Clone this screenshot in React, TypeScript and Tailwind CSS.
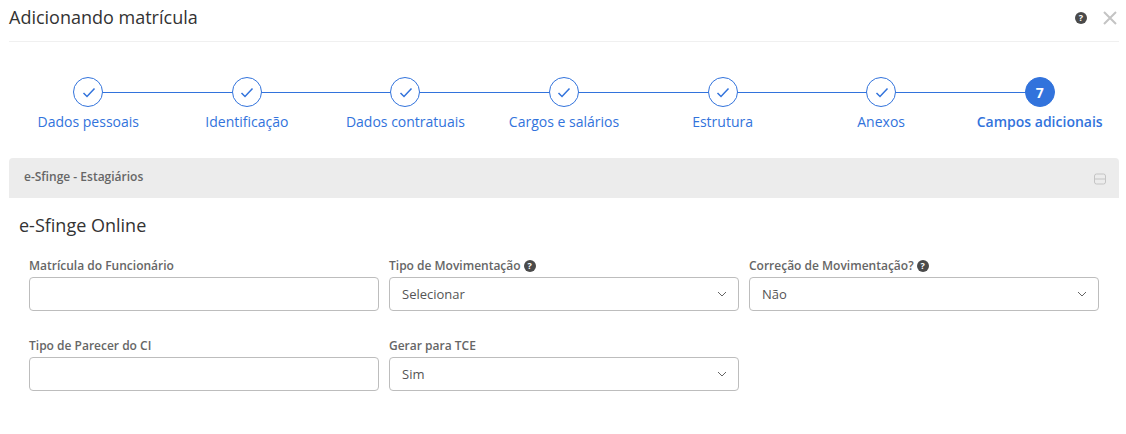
import React from "react";

const steps = ["Dados pessoais", "Identificação", "Dados contratuais", "Cargos e salários", "Estrutura", "Anexos", "Campos adicionais"];

function Help({ size = 12 }: { size?: number }) {
  return (
    <span
      className="inline-flex items-center justify-center rounded-full bg-[#4a4a4a] text-white font-bold shrink-0"
      style={{ width: size, height: size, fontSize: size - 3, lineHeight: 1 }}
    >
      ?
    </span>
  );
}

function Chevron() {
  return (
    <svg width="10" height="6" viewBox="0 0 10 6" fill="none" stroke="#666" strokeWidth="1" className="shrink-0">
      <path d="M1 1l4 4 4-4" />
    </svg>
  );
}

function Field({ label, help, value, select }: { label: string; help?: boolean; value?: string; select?: boolean }) {
  return (
    <div className="w-[350px]">
      <div className="flex items-center gap-[3px] h-[17px] text-[12px] font-semibold text-[#666]">
        {label}
        {help && <Help />}
      </div>
      <div className="mt-[3px] h-[34px] border border-[#bdbdbd] rounded-[4px] bg-white flex items-center justify-between pl-[12px] pr-[11px] text-[13px] text-[#555]">
        <span className="mt-[2px]">{value}</span>
        {select && <Chevron />}
      </div>
    </div>
  );
}

export default function App() {
  return (
    <div className="w-[1126px] h-[434px] bg-white overflow-hidden pl-[9px] pr-[7px] font-['Open_Sans',sans-serif]">
      <div className="h-[42px] border-b border-[#f0f0f0] flex items-center justify-between pb-[6px]">
        <h1 className="text-[18px] text-[#333] font-normal">Adicionando matrícula</h1>
        <div className="flex items-center gap-[16px] pr-[2px]">
          <Help size={12} />
          <svg width="14" height="14" viewBox="0 0 14 14" stroke="#c4c4c4" strokeWidth="2" fill="none">
            <path d="M1 1l12 12M13 1L1 13" />
          </svg>
        </div>
      </div>

      <div className="grid grid-cols-7 mt-[35px]">
        {steps.map((s, i) => {
          const last = i === steps.length - 1;
          return (
            <div key={s} className="relative flex flex-col items-center">
              {!last && <div className="absolute left-1/2 top-[15px] w-full h-[1px] bg-[#3273dc]" />}
              <div
                className={
                  "relative w-[30px] h-[30px] rounded-full border border-[#3273dc] flex items-center justify-center " +
                  (last ? "bg-[#3273dc] text-white font-bold text-[14px]" : "bg-white")
                }
              >
                {last ? (
                  "7"
                ) : (
                  <svg width="14" height="11" viewBox="0 0 14 11" fill="none" stroke="#3273dc" strokeWidth="1.5" className="ml-[1px]">
                    <path d="M1.5 6l3.5 3.500L12.500 1.500" />
                  </svg>
                )}
              </div>
              <div className={"mt-[4px] h-[22px] leading-[22px] text-[14px] text-[#3273dc] whitespace-nowrap " + (last ? "font-semibold" : "")}>
                {s}
              </div>
            </div>
          );
        })}
      </div>

      <div className="mt-[25px] h-[40px] bg-[#ececec] rounded-t-[4px] flex items-center justify-between pl-[15px] pr-[13px]">
        <span className="text-[12px] font-semibold text-[#666] -mt-[2px]">e-Sfinge - Estagiários</span>
        <svg width="12" height="12" viewBox="0 0 12 12" fill="none" stroke="#c4c4c4" strokeWidth="1" className="mt-[2px]">
          <rect x="0.5" y="1" width="11" height="10" rx="2" />
          <path d="M0.5 6h11" />
        </svg>
      </div>

      <h2 className="ml-[10px] mt-[13px] h-[28px] leading-[28px] text-[18px] text-[#333] font-normal">e-Sfinge Online</h2>

      <div className="ml-[20px] mt-[18px] flex flex-col gap-[26px]">
        <div className="flex gap-[10px]">
          <Field label="Matrícula do Funcionário" />
          <Field label="Tipo de Movimentação" help value="Selecionar" select />
          <Field label="Correção de Movimentação?" help value="Não" select />
        </div>
        <div className="flex gap-[10px]">
          <Field label="Tipo de Parecer do CI" />
          <Field label="Gerar para TCE" value="Sim" select />
        </div>
      </div>
    </div>
  );
}
